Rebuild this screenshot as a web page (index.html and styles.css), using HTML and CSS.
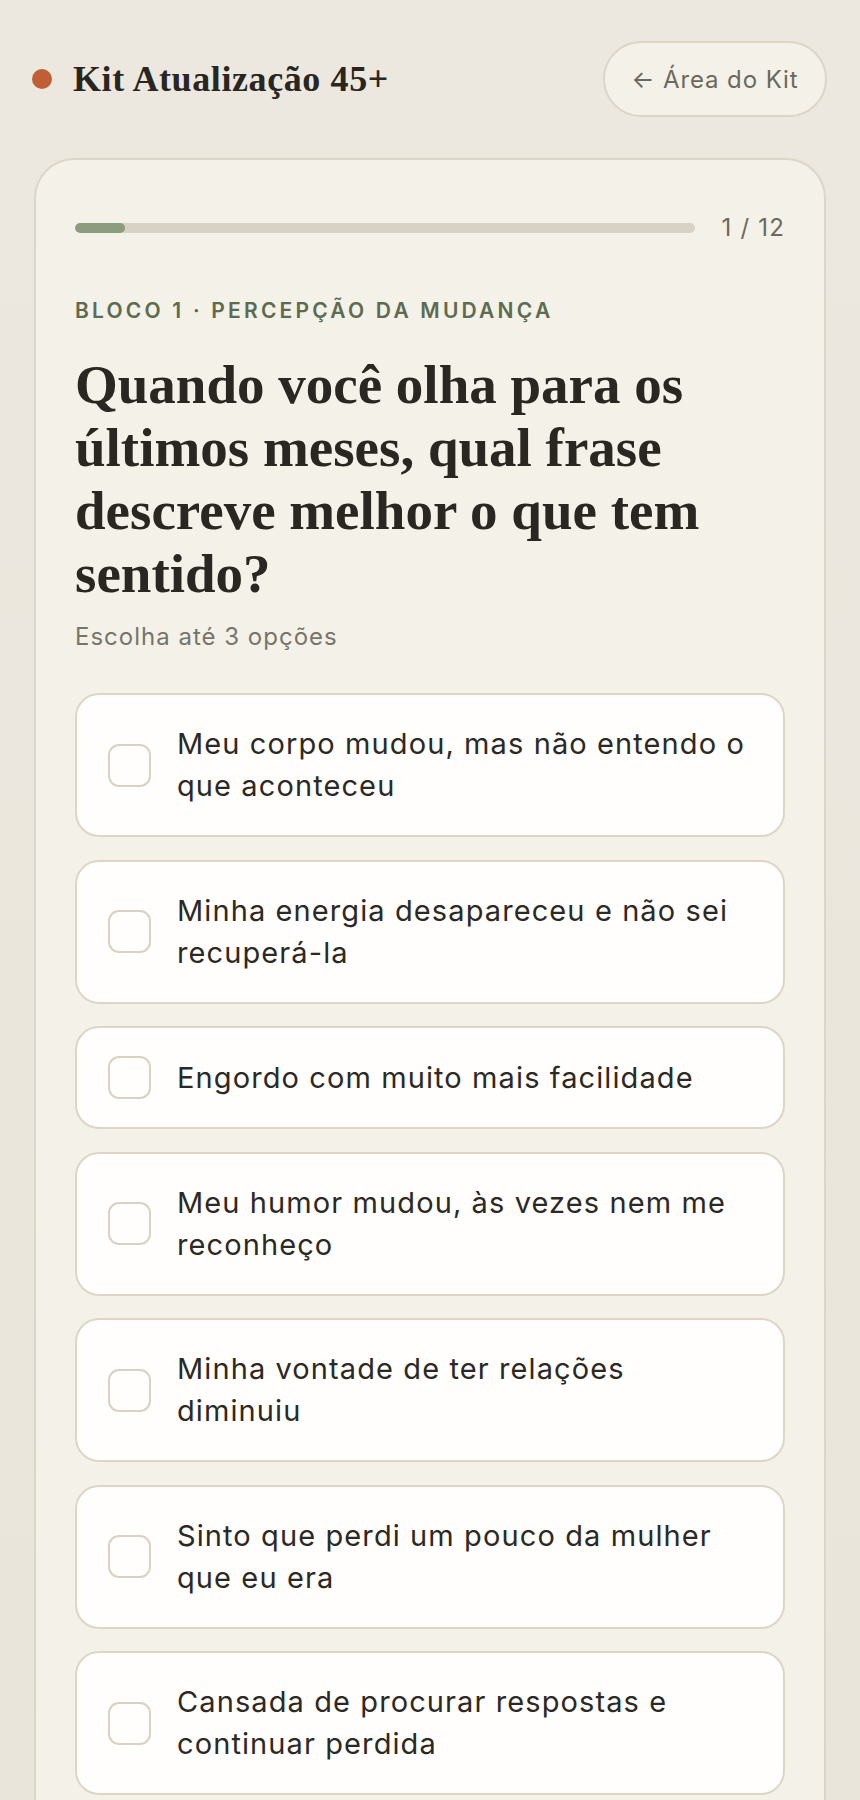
FILE: index.html
```html
<!DOCTYPE html>
<html lang="pt-BR">
<head>
<meta charset="utf-8">
<title>Kit Atualização 45+</title>
<link rel="stylesheet" href="styles.css">
</head>
<body>
<header class="topbar">
  <div class="brand">
    <span class="brand-dot"></span>
    <span class="brand-name">Kit Atualização 45+</span>
  </div>
  <a class="back-btn" href="#">← Área do Kit</a>
</header>

<main class="card">
  <div class="progress-row">
    <div class="track"><div class="fill" style="width: 8.1%"></div></div>
    <span class="count">1 / 12</span>
  </div>

  <p class="block-label">BLOCO 1 · PERCEPÇÃO DA MUDANÇA</p>
  <h1 class="question">Quando você olha para os últimos meses, qual frase descreve melhor o que tem sentido?</h1>
  <p class="hint">Escolha até 3 opções</p>

  <ul class="options">
    <li class="option"><span class="check"></span><span class="opt-text">Meu corpo mudou, mas não entendo o que aconteceu</span></li>
    <li class="option"><span class="check"></span><span class="opt-text">Minha energia desapareceu e não sei recuperá-la</span></li>
    <li class="option"><span class="check"></span><span class="opt-text">Engordo com muito mais facilidade</span></li>
    <li class="option"><span class="check"></span><span class="opt-text">Meu humor mudou, às vezes nem me reconheço</span></li>
    <li class="option"><span class="check"></span><span class="opt-text">Minha vontade de ter relações diminuiu</span></li>
    <li class="option"><span class="check"></span><span class="opt-text">Sinto que perdi um pouco da mulher que eu era</span></li>
    <li class="option"><span class="check"></span><span class="opt-text">Cansada de procurar respostas e continuar perdida</span></li>
  </ul>
</main>
</body>
</html>
```

FILE: styles.css
```css
* { box-sizing: border-box; }

html, body {
  margin: 0;
  padding: 0;
}

body {
  background: linear-gradient(180deg, #ece8df 0%, #e9e5db 100%);
  font-family: Inter, "Noto Sans", sans-serif;
  color: #2b2925;
  min-height: 1800px;
}

.topbar {
  display: flex;
  align-items: center;
  justify-content: space-between;
  padding: 41px 33px 0 32px;
  height: 117px;
}

.brand {
  display: flex;
  align-items: center;
  gap: 21px;
}

.brand-dot {
  width: 20px;
  height: 20px;
  border-radius: 50%;
  background: #c05f36;
}

.brand-name {
  font-family: "Liberation Serif", "DejaVu Serif", serif;
  font-weight: 700;
  font-size: 36px;
  color: #29261f;
  letter-spacing: 0.6px;
}

.back-btn {
  display: flex;
  align-items: center;
  justify-content: center;
  width: 224px;
  height: 76px;
  border: 2px solid #dbd5c7;
  border-radius: 38px;
  background: #f4f1e8;
  color: #6b695c;
  font-size: 24px;
  letter-spacing: 0.9px;
  text-decoration: none;
}

.card {
  margin: 41px 34px 0;
  background: #f4f1e9;
  border: 2px solid #dcd6c8;
  border-bottom: none;
  border-radius: 40px 40px 0 0;
  padding: 51px 39px 40px;
}

.progress-row {
  display: flex;
  align-items: center;
  gap: 26px;
  height: 33px;
}

.track {
  flex: 1;
  height: 10px;
  border-radius: 5px;
  background: #d8d2c4;
  overflow: hidden;
}

.fill {
  height: 100%;
  border-radius: 5px;
  background: #8b9d7d;
}

.count {
  font-size: 24px;
  color: #6b695c;
  letter-spacing: 1.2px;
}

.block-label {
  margin: 53px 0 0;
  font-size: 21px;
  line-height: 28px;
  font-weight: 600;
  letter-spacing: 3.2px;
  color: #5d6b4f;
}

.question {
  margin: 28px 0 0;
  font-family: "Liberation Serif", "DejaVu Serif", serif;
  font-weight: 700;
  font-size: 55px;
  line-height: 63px;
  color: #2a2722;
}

.hint {
  margin: 15px 0 0;
  font-size: 24px;
  line-height: 33px;
  letter-spacing: 1px;
  color: #77756a;
}

.options {
  list-style: none;
  margin: 40px 0 0;
  padding: 0;
  display: flex;
  flex-direction: column;
  gap: 22.5px;
}

.option {
  display: flex;
  align-items: center;
  gap: 26px;
  background: #fffefc;
  border: 2px solid #ddd6c7;
  border-radius: 24px;
  padding: 28px 36px 28px 31px;
}

.check {
  flex: none;
  width: 43px;
  height: 43px;
  border: 2px solid #d9d2c3;
  border-radius: 11px;
  background: #fffefc;
}

.opt-text {
  font-size: 29px;
  line-height: 42px;
  letter-spacing: 1.1px;
  color: #2b2925;
}
```
